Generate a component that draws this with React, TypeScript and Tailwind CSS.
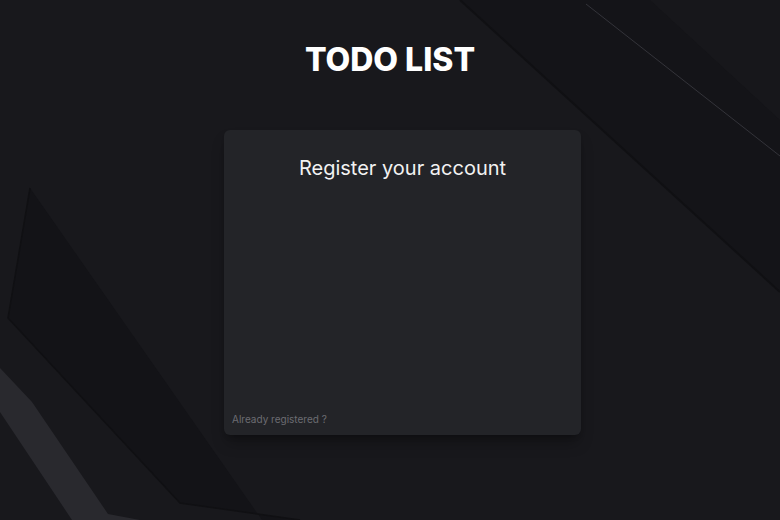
import React from 'react';

function Backdrop() {
  return (
    <svg
      className="absolute inset-0 h-full w-full"
      viewBox="0 0 780 520"
      preserveAspectRatio="none"
      aria-hidden="true"
    >
      {/* top right bands */}
      <polygon points="460,0 780,0 780,292" fill="#141418" />
      <polygon points="650,0 780,0 780,120" fill="#17171b" />
      <line x1="460" y1="0" x2="780" y2="292" stroke="#101013" strokeWidth="2" />
      <line x1="586" y1="4" x2="780" y2="156" stroke="#34343a" strokeWidth="1" />
      {/* left dark shard */}
      <polygon points="30,188 8,318 180,503 300,520 262,520" fill="#131317" />
      <polyline points="30,188 8,318 180,503 300,520" fill="none" stroke="#101013" strokeWidth="1.5" />
      {/* left light stripe */}
      <polygon points="0,368 32,402 108,514 140,520 72,520 0,412" fill="#29292e" />
    </svg>
  );
}

export default function App() {
  return (
    <div className="relative h-[520px] w-[780px] overflow-hidden bg-[#18181c] font-['Inter','Liberation_Sans',sans-serif]">
      <Backdrop />
      <main className="relative flex flex-col items-center pt-[44px]">
        <h1 className="text-[32px] font-extrabold leading-none text-white">TODO LIST</h1>

        <section className="ml-[25px] mt-[54px] flex h-[305px] w-[357px] flex-col rounded-md bg-[#232428] shadow-lg shadow-black/30">
          <h2 className="pt-[24px] text-center text-[20px] leading-7 text-[#f2f2f2]">Register your account</h2>
          <div className="flex-1" />
          <p className="px-2 pb-[9px] text-[10px] leading-[14px] text-[#6c6c72]">Already registered ?</p>
        </section>
      </main>
    </div>
  );
}
